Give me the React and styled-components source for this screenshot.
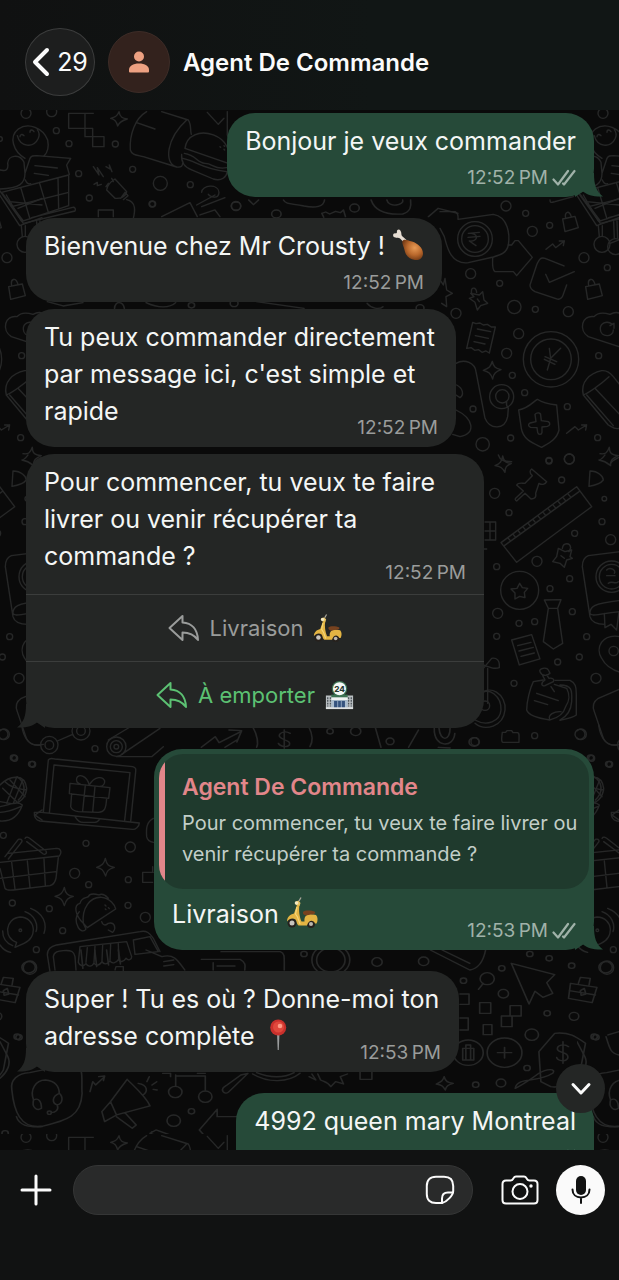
import React, { useState } from 'react';
import styled, { createGlobalStyle, css } from 'styled-components';

const messages = [
  { id: 1, mine: true, tail: true, text: 'Bonjour je veux commander', time: '12:52' },
  { id: 2, text: 'Bienvenue chez Mr Crousty !', emoji: 'drumstick', time: '12:52' },
  {
    id: 3,
    joined: true,
    inlineTime: true,
    width: 430,
    text: "Tu peux commander directement\npar message ici, c'est simple et\nrapide",
    time: '12:52'
  },
  {
    id: 4,
    joined: true,
    inlineTime: true,
    tail: true,
    width: 458,
    text: 'Pour commencer, tu veux te faire\nlivrer ou venir récupérer ta\ncommande ?',
    time: '12:52',
    options: [
      { label: 'Livraison', emoji: 'scooter' },
      { label: 'À emporter', emoji: 'store', active: true }
    ]
  },
  {
    id: 5,
    mine: true,
    tail: true,
    inlineTime: true,
    width: 440,
    quote: {
      name: 'Agent De Commande',
      text: 'Pour commencer, tu veux te faire livrer ou\nvenir récupérer ta commande ?'
    },
    text: 'Livraison',
    emoji: 'scooter',
    time: '12:53'
  },
  {
    id: 6,
    tail: true,
    inlineTime: true,
    width: 433,
    text: 'Super ! Tu es où ? Donne-moi ton\nadresse complète',
    emoji: 'pin',
    time: '12:53'
  },
  { id: 7, mine: true, tail: true, text: '4992 queen mary Montreal', time: '12:53' }
];

/* ---------- emoji ---------- */

const Drumstick = () => (
  <St.Emoji viewBox="0 0 32 32" aria-hidden="true">
    <defs>
      <radialGradient id="meat" cx="0.6" cy="0.4" r="0.65">
        <stop offset="0" stopColor="#e79a55" />
        <stop offset="0.55" stopColor="#b9682c" />
        <stop offset="1" stopColor="#6f3714" />
      </radialGradient>
    </defs>
    <path d="M4 4.500C1 3.500 0 7 2.500 8.200C5 9.500 7 8.500 8 9.500L12 13.500L14.500 11L10 7C9 6 9.800 4 8.500 1.800C7-.5 4.300.8 5 3.500Z" fill="#e6ddd3" />
    <path d="M10.500 12C12 9.500 15 11 20 12.500C26 14.500 31 19 31 24.500C31 29 27.500 31.500 23 31C17 30.500 13.500 26 12.500 21C11.800 17 9.500 14 10.500 12Z" fill="url(#meat)" />
  </St.Emoji>
);

const Scooter = () => (
  <St.Emoji viewBox="0 0 32 32" aria-hidden="true">
    <circle cx="6" cy="26" r="4.500" fill="#26211d" />
    <circle cx="6" cy="26" r="2.500" fill="#c9c5be" />
    <circle cx="25" cy="27" r="4" fill="#26211d" />
    <circle cx="25" cy="27" r="2" fill="#bdb8ae" />
    <path d="M9 5L12.500 3.500L14.500 6L13.500 9L10 8Z" fill="#e6c465" />
    <path d="M13 4L15 .5" stroke="#aaa69b" strokeWidth="1.300" />
    <circle cx="10.500" cy="6" r="1.800" fill="#f4e9c1" />
    <path d="M11 8L13.500 8C12.500 13 13.500 20 15.500 24.500L18.500 24.500C18 20 20 17.500 24 17L30 18C32 20 32 24 30.500 26.500H29C27.500 22.500 22.500 22.500 21 28.500H12.500C10.500 27 11 24.500 9.500 22.500C6.500 20.500 3.500 21.500 1 24.500C1 20 4 17.500 8 16.500Z" fill="#e3b443" />
    <path d="M11 10L9.500 17L11.500 20L14 27" stroke="#f5d77a" strokeWidth="1.200" fill="none" />
    <path d="M17 15C19 12.800 26 13.500 29 14.800C29.500 16.500 28.500 17.500 25 17.500L20 18.500C18 18 16.500 16.800 17 15Z" fill="#77421f" />
  </St.Emoji>
);

const Store = () => (
  <St.Emoji viewBox="0 0 32 32" aria-hidden="true">
    <path d="M1 16H8V30H1ZM24 16H31V30H24Z" fill="#b9bfc2" />
    <path d="M3 18V28M6 18V28M26 18V28M29 18V28" stroke="#50585d" strokeWidth="1.500" strokeDasharray="2 1" />
    <path d="M7 15H25V19H7Z" fill="#3d7353" />
    <path d="M7 18H25V21H7Z" fill="#f0f2f2" />
    <path d="M7 21H25V30H7Z" fill="#a9bccd" />
    <path d="M10 22H22V30H10Z" fill="#35537e" />
    <path d="M14 22V30M18 22V30" stroke="#93a9c2" />
    <path d="M1 29H31V31H1Z" fill="#dfe2e2" />
    <circle cx="16" cy="8.500" r="8.500" fill="#3d7353" />
    <circle cx="16" cy="8.500" r="7.200" fill="#f5f8f6" />
    <text x="16" y="12" textAnchor="middle" fontSize="9" fontWeight="800" fill="#26392f">
      24
    </text>
  </St.Emoji>
);

const Pin = () => (
  <St.Emoji viewBox="0 0 32 32" aria-hidden="true">
    <path d="M15 14H17.500L16.800 31H15.700Z" fill="#9a9c9d" />
    <circle cx="16.200" cy="8.500" r="8" fill="#c9302c" />
    <circle cx="16.500" cy="8" r="5.500" fill="#e0483c" />
    <circle cx="18" cy="7" r="2.300" fill="#ff9a86" />
  </St.Emoji>
);

const emojis = { drumstick: Drumstick, scooter: Scooter, store: Store, pin: Pin };

/* ---------- icons ---------- */

const ReplyIcon = () => (
  <svg width="32" height="28" viewBox="0 0 32 28" fill="none" stroke="currentColor" strokeWidth="2" strokeLinejoin="round">
    <path d="M1.500 14L14.500 2V8.500C24 9 29.500 15.500 30 26C26 20.500 21.500 18.500 14.500 18.500V26Z" />
  </svg>
);

const Ticks = () => (
  <svg width="24" height="18" viewBox="0 0 24 18" fill="none" stroke="currentColor" strokeWidth="2.200" strokeLinecap="round" strokeLinejoin="round">
    <path d="M1.500 10.500L6 15.500L16 2M11 14.500L12 15.500L22.500 2" />
  </svg>
);

/* ---------- wallpaper ---------- */

const TILE_W = 577;
const TILE_H = 1024;

const Dots = ({ points }) => points.map(([x, y, r]) => <circle key={`${x}-${y}-${r}`} cx={x} cy={y} r={r} />);

const Doodles = () => (
  <g fill="none" stroke="#262727" strokeWidth="4" strokeLinejoin="round" strokeLinecap="round">
    {/* groceries, burger, plug */}
    <g transform="translate(0 -5) scale(.3333)">
      <Dots
        points={[
          [78, 25, 15], [155, 20, 15], [169, 77, 9], [207, 116, 9], [346, 117, 9], [236, 206, 9], [398, 193, 9],
          [481, 235, 21], [571, 239, 9], [268, 279, 9], [457, 297, 9], [708, 303, 14], [0, 102, 7]
        ]}
      />
      <path d="M75 160C40 140 25 95 55 72C85 50 130 70 143 105C148 130 140 145 132 153M52 92C60 125 100 132 115 100C120 88 115 78 112 74M60 95C60 88 66 86 72 92M90 82C90 72 98 74 102 80" />
      <path d="M0 195C20 200 26 192 23 175C24 150 60 145 72 172L75 205C75 235 60 250 0 252M75 205L90 160C94 152 100 152 110 152L212 160L200 180L208 208M76 225C80 235 85 238 92 236M105 182L172 189M103 205L145 211" />
      <path d="M5 262L206 210V302L70 348ZM62 247L90 342M118 232L145 322M174 218L176 312M38 304L206 262M0 258L70 355L225 318C228 310 224 306 218 307L95 338M110 350L112 400M120 348L122 400" />
      <circle cx="116" cy="425" r="24" />
      <path d="M206 25H280M206 25V70H278V125H312V95H255V25" />
      <path d="M357 20C360 38 368 40 382 42C368 46 358 50 353 63C350 48 344 42 332 40C346 37 352 33 357 20Z" />
      <path d="M440 20C405 40 388 90 391 135C395 150 410 150 430 155L530 186C545 188 548 182 548 175M485 20L565 45C575 60 570 75 574 88M530 186C490 175 500 100 560 45M410 53L465 72" />
      <path d="M555 130C560 90 600 75 640 90C680 105 695 140 685 175ZM545 148C543 170 550 185 575 195L640 222C665 230 680 215 682 200M553 145C590 150 590 175 615 175C640 175 640 195 680 188M548 160C590 168 600 190 680 200M660 125L662 127M672 122L674 124M672 133L674 135" />
      <path d="M345 222L380 260C378 275 360 282 345 280L320 255C322 240 332 230 345 222ZM362 280L375 262L384 272L370 284M380 284C410 290 405 320 400 340M325 235L318 245M340 230L335 220M280 185L297 210L292 188L310 215M318 185L330 192L328 180L336 200M282 238L292 232L292 242L304 238" />
      <path d="M295 335V315H340V335M485 335L570 293L592 335M590 300L645 270M605 305L675 278M605 262C605 240 655 235 657 262C657 285 630 275 625 268M600 330L645 315L660 335" />
      <path d="M622 22L655 58L672 40M682 20V90C686 100 690 100 700 100" />
    </g>
    {/* banknotes, shield, pen */}
    <g transform="translate(440 85) scale(.3333)">
      <Dots
        points={[
          [198, 33, 15], [257, 55, 9], [277, 109, 15], [329, 91, 9], [432, 188, 15], [502, 218, 9], [92, 236, 15],
          [179, 265, 9], [223, 336, 20], [286, 343, 9], [385, 350, 15], [48, 355, 15], [236, 416, 15], [200, 475, 15],
          [217, 541, 9], [476, 482, 9], [254, 593, 9], [99, 642, 9], [382, 635, 9], [212, 729, 9], [473, 728, 9],
          [128, 748, 20], [388, 792, 15], [327, 798, 9], [333, 493, 83], [333, 493, 61], [105, 132, 52], [105, 132, 40],
          [185, 605, 36], [187, 604, 20], [486, 148, 24]
        ]}
      />
      <path d="M0 50H45C55 55 55 65 54 73L160 58C205 65 210 120 205 150C200 175 180 180 160 186L85 203C30 210 20 150 13 125L0 100M85 115L118 112M84 127L120 124M95 115C120 120 110 140 88 138L108 152" />
      <path d="M205 150H215L225 137H235L277 187L230 242L220 230H165C155 225 158 200 158 188" />
      <path d="M318 163L338 147L347 158L373 138M358 138H373L370 152" />
      <path d="M372 213L315 190C298 185 295 200 290 210L270 270C270 280 275 285 285 290L350 312C362 316 368 305 370 298L380 270M317 238L328 262L403 230" />
      <path d="M368 72L405 64L415 98L375 110ZM377 70C372 48 390 45 394 66M437 275L478 267L487 302L443 313ZM446 272C442 250 458 246 465 268" />
      <path d="M92 295L118 300L128 290L132 315L143 325L122 332L112 345L105 322L88 310L102 305ZM95 295C90 275 108 275 110 292M112 312L118 320" />
      <path d="M0 255L10 270L15 250L20 285L37 295L18 305L20 335L5 325" />
      <path d="M98 382L108 386L120 384L130 390L142 388L154 396L166 396L148 474L138 468L126 472L116 464L104 466L94 458L80 460ZM112 402L152 410M106 422L145 430M102 440L135 447" />
      <path d="M157 499C160 515 166 520 183 524C168 530 160 535 158 552C152 535 146 530 130 526C148 520 152 515 157 499Z" />
      <path d="M48 505C75 490 105 505 108 530L135 670C150 705 195 705 203 665L205 640C198 632 198 628 200 622M50 570C70 580 72 600 60 608L48 600M48 645C100 670 110 715 60 725L38 718" />
      <path d="M236 645C265 640 280 620 292 613C310 625 330 628 350 630L357 705C350 735 325 745 305 757C280 745 250 735 244 700ZM285 658C290 652 302 652 302 660L304 677L325 680C332 685 330 692 322 694L306 696V712C305 720 295 720 293 712L291 698L272 697C264 694 264 688 270 684L288 680Z" />
      <path d="M328 460L332 490L362 460M332 490L322 525M315 485L350 500M313 493L345 508" />
      <path d="M380 715L405 695L415 705L440 690M425 690H440L437 705" />
      <path d="M537 455L445 425C415 405 425 360 462 365C475 350 500 355 510 358C525 350 537 352 545 358M517 388C500 375 480 385 481 403C482 428 520 428 520 405M510 392L522 385V400" />
      <path d="M430 600C420 560 450 535 485 527C500 525 512 535 520 545L600 645L537 700C525 705 515 695 505 690L430 600C445 595 480 570 507 545M440 600L520 692M465 580L545 665" />
      <path d="M508 757C508 775 515 780 535 782C518 790 510 795 512 812M508 757C502 775 495 778 480 776M175 780C180 795 190 800 215 800" />
      <path d="M330 15C330 25 335 22 345 20L400 5M410 0L470 92L537 68M430 0L475 78M440 20L537 30M465 40L537 10M475 92L478 125M487 92V124M510 145L537 135" />
    </g>
    {/* school things */}
    <g transform="translate(475 345) scale(.3333)">
      <Dots
        points={[
          [222, 16, 9], [283, 12, 15], [59, 115, 15], [260, 75, 9], [102, 173, 9], [388, 131, 7], [381, 200, 9],
          [299, 235, 9], [407, 254, 15], [186, 319, 15], [65, 335, 9], [284, 371, 9], [225, 401, 9], [68, 475, 15],
          [292, 470, 9], [132, 505, 9], [179, 500, 9], [65, 544, 9], [335, 545, 9], [313, 606, 9], [248, 621, 9],
          [363, 670, 15], [117, 685, 9], [179, 842, 9], [315, 838, 15], [134, 406, 57], [410, 365, 47], [410, 365, 37],
          [416, 588, 14], [0, 860, 12]
        ]}
      />
      <path d="M83 3C87 22 95 25 109 25C95 32 90 35 90 52C82 38 76 34 60 32C76 25 80 20 83 3Z" />
      <path d="M170 42L215 80C210 90 200 90 192 85L182 115C185 130 175 132 168 132L150 115L125 138C120 136 120 132 122 130L145 108L125 90C130 82 140 85 150 85L172 62C162 55 165 45 170 42Z" />
      <path d="M78 263L305 95L350 155L125 322ZM88 272L315 108M100 250L106 257M115 239L121 246M130 228L136 235M145 217L151 224M160 206L166 213M175 195L181 202M190 184L196 191M205 173L211 180M220 162L226 169M235 151L241 158M250 140L256 147M265 129L271 136M280 118L286 125" />
      <path d="M345 48C370 48 385 65 385 75C375 88 355 92 342 94Z" />
      <path d="M30 201H62V255H30M45 201V255M30 228H62M25 255V282H35" />
      <path d="M250 280L270 290L290 285L285 305L292 310L275 315L268 337L255 325L233 320L245 305ZM262 280C265 262 285 262 287 278L282 290M258 302L268 310" />
      <path d="M134 385L142 398L158 400L148 412L150 428L134 424L120 432L120 414L108 402L126 400Z" />
      <path d="M208 435L258 434L248 460H220ZM220 460L205 560L235 582L263 565L248 460" />
      <path d="M110 555L170 539L195 612L133 630ZM128 572L168 562M132 588L175 577M138 604L178 594" />
      <path d="M436 290L340 302C325 308 322 320 322 335L345 485C350 505 370 508 390 508M345 480C342 455 355 445 436 436M345 475C350 485 360 478 436 470M388 475L390 518L408 508L425 525L432 470M395 345C405 335 425 345 418 355M395 362H420M400 385C412 375 420 390 430 380" />
      <path d="M436 545C380 535 360 580 380 610C390 630 410 645 436 652M436 702L370 730C355 740 352 755 358 770L385 850C395 870 410 872 436 868" />
      <path d="M205 675L175 680C165 700 155 740 155 765C160 780 190 790 225 795C245 790 265 780 272 755C285 735 285 720 275 700L238 688M240 676H285C305 685 303 700 304 720V780C290 790 270 792 255 796M255 690C290 690 292 705 290 740C288 770 275 785 255 795M225 795C215 780 240 768 258 770M185 715L250 737M178 737L218 749" />
      <path d="M195 650C190 640 215 635 220 645L225 655C215 665 200 662 195 650ZM203 662L210 675C195 685 200 695 210 692L235 680C240 672 230 668 222 670L215 660M228 695L238 710" />
      <path d="M25 640L50 610C65 608 75 615 73 638C60 642 50 640 25 630M25 640L22 740M38 640V745M5 725C45 680 95 720 90 765C85 815 30 830 0 805M15 720C40 690 80 725 78 765C75 800 35 815 0 795" />
      <circle cx="30" cy="752" r="14" />
      <path d="M82 832H92L96 827H110L114 833H128C134 835 132 840 132 862H84C78 862 80 845 82 832Z" />
      <path d="M390 0C380 12 378 15 372 15C390 18 395 22 404 30C408 20 415 15 430 8" />
    </g>
    {/* laptop, basket, taco, van */}
    <g transform="translate(0 615) scale(.3333)">
      <Dots
        points={[
          [12, 28, 16], [148, 60, 26], [148, 60, 13], [243, 18, 27], [243, 18, 13], [285, 71, 9], [349, 65, 29],
          [349, 65, 18], [349, 65, 7], [44, 100, 9], [98, 118, 9], [10, 331, 9], [258, 355, 9], [391, 366, 15],
          [224, 445, 15], [266, 479, 9], [385, 464, 9], [37, 534, 9], [148, 551, 9], [384, 541, 9], [188, 617, 9],
          [436, 577, 15], [109, 674, 9], [90, 728, 20], [61, 616, 4]
        ]}
      />
      <path d="M65 0C70 40 90 65 120 60M172 48L218 28M325 45L400 0M365 88L480 10M350 95H455L490 65" />
      <path d="M130 262L145 105C150 98 155 100 165 102L398 125C408 128 408 132 407 140L392 290M148 265L162 120L390 143L374 286M103 262H125L418 294C418 305 405 314 398 313L120 288C108 285 102 275 103 262ZM225 275C235 290 240 292 250 292H285C292 292 298 285 300 282" />
      <path d="M210 175L330 188L326 220L208 206ZM215 206L212 245C215 255 222 258 235 260L295 262C315 260 318 250 320 220M256 180L248 258M285 184L278 262M268 180C260 150 235 145 230 160C228 168 232 174 240 177M268 180C285 150 310 155 314 168C315 178 308 184 300 184" />
      <path d="M0 180C30 150 75 145 80 190C78 215 60 240 30 235L0 230M15 170C30 185 45 190 80 195M8 190L55 235M30 165L75 215M50 157L20 235M68 165L40 235M0 245C30 240 50 225 67 240C55 275 30 290 0 288M0 262C20 262 40 255 62 245" />
      <path d="M25 385L170 370C185 370 185 385 178 393L0 412M0 430L15 490C20 497 30 496 40 495L150 482C165 478 165 468 168 460L175 398M35 412L45 492M82 408L90 488M132 402L136 482M0 460L168 440M15 395L55 343C65 340 70 348 62 355L25 402M75 340C80 333 88 338 92 342L138 378C142 385 135 390 130 387L80 350" />
      <path d="M316 400C320 420 326 425 343 427C326 432 320 438 317 453C310 436 306 430 290 427C306 422 312 416 316 400ZM193 487C196 506 204 512 220 514C204 518 198 524 193 542C188 524 182 518 165 514C182 510 188 505 193 487Z" />
      <path d="M250 595C245 550 270 515 305 517C330 520 345 540 347 552L262 608ZM250 595C225 570 220 540 240 535C245 515 258 520 265 515C270 502 290 508 297 510C310 502 320 515 325 520M250 595L258 612C252 622 240 618 235 608C225 590 225 575 238 560M315 540L318 543M325 548L328 551M316 552L318 554M305 590C310 605 320 600 325 595C345 590 348 610 340 620M325 615L338 622" />
      <path d="M50 652C10 640 15 580 60 576C110 578 112 640 72 655L45 667ZM75 560C105 570 115 600 108 620M92 550C130 565 142 595 132 625M8 618C8 640 20 655 38 662M0 660C10 675 20 680 32 682" />
      <path d="M150 740L142 690C142 670 155 665 170 660L420 620C440 615 450 625 460 640L480 680M165 735L160 695C162 680 175 678 190 677C215 675 222 680 225 695L228 735M240 665L380 650L395 695C395 705 385 708 378 700C370 712 360 712 355 704C348 716 335 716 330 708C322 720 310 718 306 710C298 724 286 722 282 714C275 728 262 724 258 716C250 726 238 722 235 712ZM262 668L258 712M285 664L282 712M308 660L306 708M332 658L330 706M355 655L356 702M400 645L450 635L475 680L405 688ZM345 735L348 725H370V740" />
      <path d="M460 280C440 290 438 310 440 335C442 345 448 350 460 352M460 442H428V472H458M458 425V442" />
    </g>
    {/* strip between the options and the quote */}
    <g transform="translate(0 610) scale(.3948 .3333)">
      <Dots points={[[836, 34, 8], [901, 34, 13], [1201, 66, 13], [988, 64, 10], [1542, 132, 8], [1496, 113, 8]]} />
      <path d="M510 82L545 50L555 68L610 35M580 30L612 32L600 66M570 82L600 60M640 20C652 45 655 70 650 82M735 40C720 30 705 40 708 50C715 62 738 60 733 75C725 85 708 78 705 70M720 30V85M782 20C795 50 790 70 785 80M950 20L965 82M1060 30L1035 82M1100 25C1098 85 1150 85 1152 40M1112 25C1115 65 1140 65 1140 25M1110 82L1140 84" />
      <path d="M1505 170C1525 185 1530 215 1508 240M1568 270L1550 285L1568 300" />
    </g>
    {/* bottom strip: pointers, headset, megaphone */}
    <g transform="translate(0 840) scale(.3948 .3333)">
      <Dots
        points={[
          [770, 12, 8], [955, 36, 13], [1073, 34, 13], [1271, 55, 8], [1448, 47, 8], [1534, 52, 17], [1174, 92, 8],
          [1275, 131, 13], [1386, 190, 8], [1454, 199, 12], [1347, 254, 17], [1335, 354, 8], [1505, 260, 8],
          [1269, 399, 12], [1205, 404, 8], [444, 426, 17], [520, 440, 17], [485, 484, 8], [440, 512, 17], [1342, 12, 8],
          [1391, 25, 8], [48, 262, 8], [13, 550, 8], [1234, 86, 18], [1186, 308, 38], [1278, 308, 44], [838, 30, 48],
          [838, 30, 36]
        ]}
      />
      <path d="M510 28H608C622 38 622 45 620 60M560 5H710C722 10 720 20 720 60M540 38V60M550 48H595M1090 0L1190 60C1215 55 1225 30 1230 0M1120 0L1190 40M370 0L410 20C440 10 450 30 468 60M205 0L210 55M240 0L245 50M270 0L275 45M300 0L305 42M415 35L440 30M415 48L440 44" />
      <path d="M1224 100L1212 118M1295 40L1405 74L1385 98L1400 130L1375 142L1355 124L1340 162Z" />
      <path d="M1165 132H1188V163H1165M1215 158H1243V190H1215ZM1165 204H1186V240H1165M1224 224H1246V254H1224ZM1292 167H1320V198H1292ZM1270 198H1297V230H1270ZM912 362H942V388H912Z" />
      <path d="M1445 100L1512 112L1500 158L1440 145ZM1465 100L1470 82L1495 85L1492 105M1442 122L1508 135M1470 122L1480 115L1484 132L1472 136Z" />
      <path d="M1172 295H1200V330H1172ZM1180 295V330M1192 295V330M1180 292V285H1192V292M1278 292V324M1260 308H1296" />
      <path d="M1365 305L1405 250C1440 245 1460 260 1483 280L1470 360C1450 400 1420 415 1395 410L1370 395ZM1440 290C1430 280 1410 285 1412 298C1415 310 1442 305 1438 325C1432 338 1412 332 1410 322M1426 275V340M1305 415C1310 380 1360 400 1400 370C1410 355 1385 355 1365 370C1340 390 1330 400 1305 415Z" />
      <path d="M30 420C25 390 45 370 75 368L190 340C215 350 205 400 208 430C205 500 170 510 110 528C50 540 35 480 30 420ZM85 450C75 420 90 390 115 390C140 392 150 410 150 430M85 450C80 470 92 485 105 475C105 455 98 442 85 450ZM150 430C130 440 132 460 145 465C160 460 160 440 150 430ZM145 465C150 480 140 488 130 488M120 488A5 5 0 1 0 130 488A5 5 0 1 0 120 488" />
      <path d="M228 425L235 395L242 405L265 380M250 380L265 378L262 392M322 388C340 410 370 440 380 468L295 495L265 515L258 485L280 455ZM280 455L295 495M295 500L335 535L345 525L318 490M350 400C375 405 375 425 362 435M372 395L378 380M385 405L397 395M388 418L398 420" />
      <path d="M412 370H432V380M445 375V408M445 378H520V420M500 370H520M565 425C560 415 568 410 575 405L610 375L628 370L580 425C575 432 568 430 565 425ZM640 372C680 400 730 398 760 370M650 368C685 385 720 384 745 368" />
      <path d="M783 380L800 390L790 372M805 372L812 390C820 395 830 395 838 410L850 395L870 402L862 380L880 372M1125 380C1128 395 1135 398 1148 400C1135 404 1130 408 1128 420C1122 408 1118 404 1105 402C1118 396 1122 392 1125 380Z" />
      <path d="M505 540L550 478V500H605M505 540L535 580L570 600M570 600V575L600 578M395 540L480 575L470 600M385 545L350 600M395 540L380 550L460 585" />
      <path d="M0 385C20 365 28 340 20 320L0 275M1540 255L1568 245M1535 260C1545 300 1548 310 1568 315M1503 500C1510 525 1530 532 1568 530" />
    </g>
    {/* between the first grey bubbles */}
    <g transform="translate(0 90) scale(.3948 .3333)">
      <Dots points={[[386, 12, 8], [598, 18, 12], [700, 42, 12], [898, 24, 12], [485, 316, 8], [593, 310, 10], [1064, 324, 10]]} />
      <path d="M630 0L642 14L655 0M718 0C725 15 740 10 770 18C800 25 820 20 822 0M940 0C950 35 980 45 1020 42C1040 35 1042 20 1040 0M980 0C985 25 1025 15 1020 0M815 40L825 36L835 42L850 34L862 38L870 30L875 50M815 40L820 52M1085 50L1110 25L1160 40M290 325C292 300 312 305 315 325M370 308C400 325 430 325 445 308M650 305L770 325M930 310C940 325 960 330 970 320M120 305L160 318L210 308" />
    </g>
  </g>
);

const Wallpaper = () => (
  <St.Wallpaper aria-hidden="true">
    <defs>
      <g id="doodles">
        <Doodles />
      </g>
      <pattern id="tile" width={TILE_W} height={TILE_H} patternUnits="userSpaceOnUse">
        <use href="#doodles" />
        <use href="#doodles" x={-TILE_W} />
      </pattern>
    </defs>
    <rect width="100%" height="100%" fill="url(#tile)" />
  </St.Wallpaper>
);

/* ---------- chat ---------- */

const Message = ({ message }) => {
  const { mine, tail, joined, inlineTime, width, text, emoji, time, quote, options } = message;
  const Emoji = emojis[emoji];

  return (
    <St.Bubble $mine={mine} $joined={joined} $width={width} $quoted={!!quote}>
      {tail && (
        <St.Tail $mine={mine} viewBox="0 0 28 24">
          <path d="M9 0C9 12 7 18 0 23.500C9 24 16 22 20 18.500L28 24V0Z" />
        </St.Tail>
      )}
      {quote && (
        <St.Quote>
          <St.QuoteName>{quote.name}</St.QuoteName>
          <St.QuoteText>{quote.text}</St.QuoteText>
        </St.Quote>
      )}
      <St.BubbleBody $quoted={!!quote} $options={!!options}>
        <span>{text}</span>
        {Emoji && (
          <>
            {' '}
            <Emoji />
          </>
        )}
        <St.Meta $mine={mine} $inline={inlineTime}>
          <time>{time}&#8239;PM</time>
          {mine && <Ticks />}
        </St.Meta>
      </St.BubbleBody>
      {options?.map((option) => {
        const OptionEmoji = emojis[option.emoji];
        return (
          <St.Option key={option.label} type="button" $active={option.active}>
            <ReplyIcon />
            <span>{option.label}</span>
            <OptionEmoji />
          </St.Option>
        );
      })}
    </St.Bubble>
  );
};

const App = () => {
  const [draft, setDraft] = useState('');

  return (
    <St.Page>
      <GlobalStyle />
      <St.Header>
        <St.BackButton type="button">
          <svg width="18" height="30" viewBox="0 0 18 30" fill="none" stroke="currentColor" strokeWidth="4" strokeLinecap="round" strokeLinejoin="round">
            <path d="M15 3L3 15L15 27" />
          </svg>
          29
        </St.BackButton>
        <St.Avatar>
          <svg width="20" height="22" viewBox="0 0 20 22" fill="#eda182">
            <circle cx="10" cy="5.500" r="5" />
            <path d="M0 19C0 15 4 12.500 10 12.500S20 15 20 19V20.500Q20 21.500 19 21.500H1Q0 21.500 0 20.500Z" />
          </svg>
        </St.Avatar>
        <St.Title>Agent De Commande</St.Title>
      </St.Header>

      <St.Chat>
        <Wallpaper />
        <St.Messages>
          {messages.map((message) => (
            <Message key={message.id} message={message} />
          ))}
        </St.Messages>
        <St.ScrollButton type="button" aria-label="Descendre">
          <svg width="22" height="14" viewBox="0 0 22 14" fill="none" stroke="currentColor" strokeWidth="3" strokeLinecap="round" strokeLinejoin="round">
            <path d="M3 2.500L11 11L19 2.500" />
          </svg>
        </St.ScrollButton>
      </St.Chat>

      <St.Footer>
        <St.IconButton type="button" aria-label="Ajouter">
          <svg width="32" height="32" viewBox="0 0 32 32" stroke="currentColor" strokeWidth="3" strokeLinecap="round">
            <path d="M16 2V30M2 16H30" />
          </svg>
        </St.IconButton>
        <St.InputBox>
          <St.Input type="text" aria-label="Message" value={draft} onChange={(e) => setDraft(e.target.value)} />
          <St.IconButton type="button" aria-label="Autocollants">
            <svg width="30" height="30" viewBox="0 0 30 30" fill="none" stroke="currentColor" strokeWidth="2" strokeLinecap="round" strokeLinejoin="round">
              <path d="M17 28H11C5 28 1.800 25 1.800 19V11C1.800 5 5 1.800 11 1.800H19C25 1.800 28.200 5 28.200 11V16C28.200 20 22 27 17 28Z" />
              <path d="M17 28V23.500C17 19.500 19 17.500 23 17.500H28" />
            </svg>
          </St.IconButton>
        </St.InputBox>
        <St.IconButton type="button" aria-label="Appareil photo">
          <svg width="38" height="30" viewBox="0 0 38 30" fill="none" stroke="currentColor" strokeWidth="2" strokeLinejoin="round">
            <path d="M5 5.500H9.500C11 5.500 11.500 5 12 4L12.800 2.800C13.300 1.800 14 1.500 15 1.500H23C24 1.500 24.700 1.800 25.200 2.800L26 4C26.500 5 27 5.500 28.500 5.500H33C35.500 5.500 36.500 6.500 36.500 9V25C36.500 27.500 35.500 28.500 33 28.500H5C2.500 28.500 1.500 27.500 1.500 25V9C1.500 6.500 2.500 5.500 5 5.500Z" />
            <circle cx="19" cy="16.500" r="7.500" />
            <circle cx="30" cy="11" r="1.700" fill="currentColor" stroke="none" />
          </svg>
        </St.IconButton>
        <St.MicButton type="button" aria-label="Message vocal">
          <svg width="20" height="28" viewBox="0 0 20 28" fill="none" stroke="currentColor" strokeWidth="2" strokeLinecap="round">
            <rect x="5" y="0" width="10" height="19" rx="5" fill="currentColor" stroke="none" />
            <path d="M1.500 13.500C1.500 18.500 5 21.500 10 21.500S18.500 18.500 18.500 13.500M10 22V27" />
          </svg>
        </St.MicButton>
      </St.Footer>
    </St.Page>
  );
};

export default App;

const GlobalStyle = createGlobalStyle`
  * {
    box-sizing: border-box;
  }

  body {
    margin: 0;
    background-color: #000;
    font-family: Inter, 'Liberation Sans', sans-serif;
  }

  button,
  input {
    font-family: inherit;
  }

  svg {
    display: block;
    flex-shrink: 0;
  }
`;

const buttonReset = css`
  display: flex;
  align-items: center;
  justify-content: center;
  padding: 0;
  border: none;
  background-color: transparent;
  color: #fbfbfb;
  cursor: pointer;
`;

const St = {
  Page: styled.div`
    display: flex;
    flex-direction: column;
    height: 100vh;
    overflow: hidden;
  `,

  Header: styled.header`
    display: flex;
    align-items: center;
    height: 110px;
    padding: 14px 25px 0;
    background: linear-gradient(90deg, #101111, #111615 60%);
  `,

  BackButton: styled.button`
    ${buttonReset}
    gap: 7px;
    width: 70px;
    height: 68px;
    border: 1px solid #3c3d3d;
    border-radius: 50%;
    background-color: #1d1e1e;
    font-size: 25px;
  `,

  Avatar: styled.div`
    display: flex;
    align-items: center;
    justify-content: center;
    width: 62px;
    height: 62px;
    margin: 0 13px;
    border: 1px solid #3d2c27;
    border-radius: 50%;
    background-color: #33221d;
  `,

  Title: styled.h1`
    margin: 0;
    color: #fbfbfb;
    font-size: 24px;
    font-weight: 600;
  `,

  Chat: styled.main`
    position: relative;
    flex: 1;
    min-height: 0;
    overflow: hidden;
    background-color: #0a0a0a;
  `,

  Wallpaper: styled.svg`
    position: absolute;
    inset: 0;
    width: 100%;
    height: 100%;
  `,

  Messages: styled.div`
    position: relative;
    display: flex;
    flex-direction: column;
    align-items: flex-start;
    padding: 3px 25px 0 26px;
  `,

  Bubble: styled.article`
    position: relative;
    width: ${({ $width }) => ($width ? `${$width}px` : 'auto')};
    max-width: 100%;
    margin-top: ${({ $joined }) => ($joined ? '7px' : '21px')};
    padding-top: ${({ $quoted }) => ($quoted ? '5px' : '0')};
    align-self: ${({ $mine }) => ($mine ? 'flex-end' : 'flex-start')};
    border-radius: 28px;
    background-color: ${({ $mine }) => ($mine ? '#264a39' : '#242625')};

    &:first-child {
      margin-top: 0;
    }
  `,

  Tail: styled.svg`
    position: absolute;
    bottom: 0;
    ${({ $mine }) => ($mine ? 'right: -9px; transform: scaleX(-1);' : 'left: -9px;')}
    width: 28px;
    height: 24px;
    fill: ${({ $mine }) => ($mine ? '#264a39' : '#242625')};
  `,

  BubbleBody: styled.div`
    display: flow-root;
    padding: ${({ $quoted }) => ($quoted ? '7px' : '10px')} 18px ${({ $options }) => ($options ? '11px' : '9px')};
    color: #f4f6f5;
    font-size: 25px;
    line-height: 37px;
    white-space: pre-wrap;
  `,

  Emoji: styled.svg`
    display: inline-block;
    width: 32px;
    height: 32px;
    vertical-align: -6px;
  `,

  /* the time hangs on the last line when there is room beside it */
  Meta: styled.div`
    display: flex;
    align-items: center;
    justify-content: flex-end;
    gap: 4px;
    float: ${({ $inline }) => ($inline ? 'right' : 'none')};
    margin-top: ${({ $inline }) => ($inline ? '25px' : '8px')};
    color: ${({ $mine }) => ($mine ? '#a0b2a9' : '#9a9c9b')};
    font-size: 19px;
    line-height: 20px;
  `,

  Quote: styled.blockquote`
    margin: 0 5px;
    padding: 18px 8px 19px 23px;
    border-radius: 24px;
    background: linear-gradient(90deg, #e2868a 6px, #1f3a2d 6px);
  `,

  QuoteName: styled.strong`
    display: block;
    margin-bottom: 6px;
    color: #e2868a;
    font-size: 23px;
    font-weight: 600;
    line-height: 30px;
  `,

  QuoteText: styled.p`
    margin: 0;
    color: #c2cec8;
    font-size: 20px;
    line-height: 31px;
    white-space: pre-line;
  `,

  Option: styled.button`
    ${buttonReset}
    gap: 10px;
    width: 100%;
    height: 67px;
    border-top: 1px solid #3b3d3c;
    color: ${({ $active }) => ($active ? '#5cc173' : '#9a9c9b')};
    font-size: 22px;

    svg:last-child {
      width: 29px;
      height: 29px;
    }
  `,

  ScrollButton: styled.button`
    ${buttonReset}
    position: absolute;
    right: 14px;
    bottom: 37px;
    width: 49px;
    height: 49px;
    border-radius: 50%;
    background-color: #242625;
  `,

  Footer: styled.footer`
    display: flex;
    align-items: flex-start;
    height: 130px;
    padding: 15px 14px 0 20px;
    background-color: #111212;

    & > button {
      height: 50px;
    }
  `,

  IconButton: styled.button`
    ${buttonReset}
  `,

  InputBox: styled.div`
    display: flex;
    flex: 1;
    min-width: 0;
    height: 50px;
    margin: 0 28px 0 21px;
    padding: 0 17px;
    border: 1px solid #353636;
    border-radius: 25px;
    background-color: #292a2a;
  `,

  Input: styled.input`
    flex: 1;
    min-width: 0;
    padding: 0;
    border: none;
    outline: none;
    background-color: transparent;
    color: #f4f6f5;
    font-size: 25px;
  `,

  MicButton: styled.button`
    ${buttonReset}
    width: 49px;
    margin-left: 17px;
    border-radius: 50%;
    background-color: #fafafa;
    color: #111212;
  `
};
